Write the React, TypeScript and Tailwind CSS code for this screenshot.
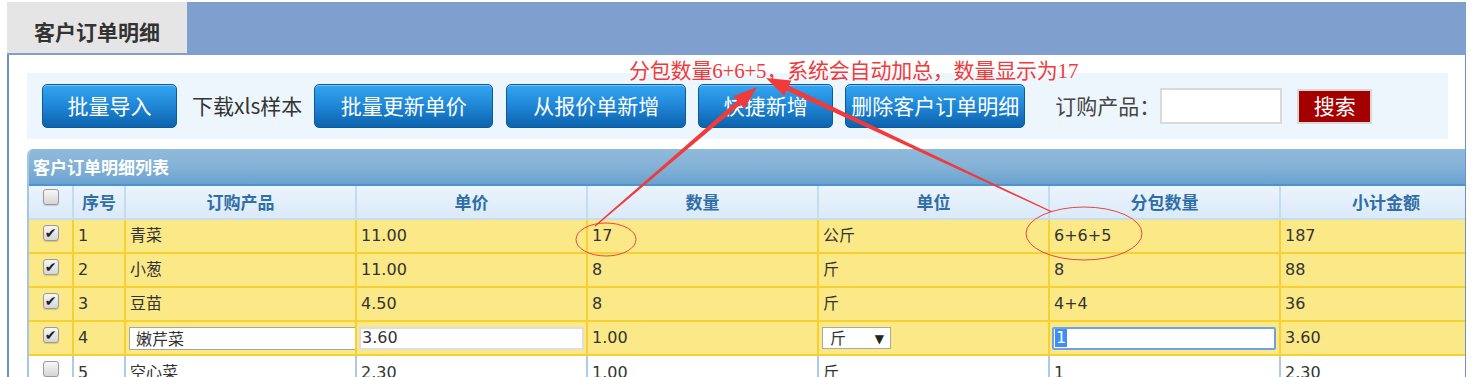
import React from 'react';

const cols = [45, 52, 231, 231, 231, 231, 231, 212];
const headers = ['', '序号', '订购产品', '单价', '数量', '单位', '分包数量', '小计金额'];

const rows = [
    { no: '1', name: '青菜', price: '11.00', qty: '17', unit: '公斤', pack: '6+6+5', total: '187', checked: true },
    { no: '2', name: '小葱', price: '11.00', qty: '8', unit: '斤', pack: '8', total: '88', checked: true },
    { no: '3', name: '豆苗', price: '4.50', qty: '8', unit: '斤', pack: '4+4', total: '36', checked: true },
];

const cjk = "font-['Noto_Sans_CJK_SC',sans-serif]";
const cell = "font-['DejaVu_Sans','Noto_Sans_CJK_SC',sans-serif]";

// tapered arrow shape pointing at (x2, y2)
const arrowPoints = (x1: number, y1: number, x2: number, y2: number) => {
    const dx = x2 - x1, dy = y2 - y1;
    const len = Math.hypot(dx, dy);
    const ux = dx / len, uy = dy / len;
    const nx = -uy, ny = ux;
    const head = 24, hw = 8.5, w0 = 0.6, w1 = 2.6;
    const bx = x2 - ux * head, by = y2 - uy * head;
    const p = [
        [x1 + nx * w0, y1 + ny * w0],
        [bx + nx * w1, by + ny * w1],
        [bx + nx * hw, by + ny * hw],
        [x2, y2],
        [bx - nx * hw, by - ny * hw],
        [bx - nx * w1, by - ny * w1],
        [x1 - nx * w0, y1 - ny * w0],
    ];
    return p.map((q) => q[0].toFixed(1) + ',' + q[1].toFixed(1)).join(' ');
};

const Checkbox = ({ checked }: { checked: boolean }) => (
    <div className="w-[16px] h-[16px] rounded-[3px] border border-[#9a9a9a] bg-linear-to-b from-[#f7f7f7] to-[#d6d6d6] shadow-[0_1px_1px_rgba(0,0,0,0.15)] flex items-center justify-center">
        {checked && <span className="text-[14px] leading-none font-bold text-[#1e1e1e] font-['DejaVu_Sans',sans-serif]">✔</span>}
    </div>
);

const BlueButton = ({ label, width }: { label: string; width: string }) => (
    <button className={`${width} h-[44px] shrink-0 rounded-[5px] border border-[#0b5a9e] bg-linear-to-b from-[#35a6f1] via-[#1f86d6] to-[#0c63ad] text-white text-[21px] ${cjk} shadow-[inset_0_1px_0_rgba(255,255,255,0.35)] flex items-center justify-center`}>
        {label}
    </button>
);

const App = () => {
    return (
        <div className="relative w-[1484px] h-[377px] overflow-hidden bg-white">
            <div className="pt-[2px] pl-[7px] w-[1466px]">
                {/* top tab bar */}
                <div className="h-[53px] bg-[#7fa0cf] flex items-start">
                    <div className={`w-[180px] h-[51px] bg-[#e5e5e5] flex items-center justify-center pt-[8px] text-[21px] font-bold text-[#333] ${cjk}`}>
                        客户订单明细
                    </div>
                </div>

                {/* panel */}
                <div className="border-l-2 border-r border-[#6d91c6] h-[330px] overflow-hidden">
                    {/* toolbar */}
                    <div className={`mt-[18px] ml-[18px] w-[1421px] h-[66px] bg-[#eef6fd] flex items-center pl-[15px] ${cjk}`}>
                        <BlueButton label="批量导入" width="w-[135px]" />
                        <span className="ml-[15px] text-[21px] text-[#333]">下载xls样本</span>
                        <div className="ml-[12px]"><BlueButton label="批量更新单价" width="w-[179px]" /></div>
                        <div className="ml-[13px]"><BlueButton label="从报价单新增" width="w-[180px]" /></div>
                        <div className="ml-[12px]"><BlueButton label="快捷新增" width="w-[135px]" /></div>
                        <div className="ml-[12px]"><BlueButton label="删除客户订单明细" width="w-[180px]" /></div>
                        <span className="ml-[30px] text-[21px] text-[#444]">订购产品：</span>
                        <div className="w-[122px] h-[36px] border-2 border-[#dadada] bg-white" />
                        <button className="ml-[15px] w-[75px] h-[35px] border-2 border-[#d8d8d8] bg-[#a50000] text-white text-[21px] flex items-center justify-center">
                            搜索
                        </button>
                    </div>

                    {/* table */}
                    <div className="mt-[10px] ml-[18px] w-[1468px] border-l-2 border-[#a6c6e3] rounded-tl-[6px] overflow-hidden">
                        <div className={`h-[37px] border-b-2 border-[#4a94d3] bg-linear-to-b from-[#8fbadb] via-[#84b2d7] to-[#6aa2cf] flex items-center pl-[4px] text-white font-bold text-[17px] ${cjk}`}>
                            客户订单明细列表
                        </div>
                        {/* header row */}
                        <div className="flex h-[34px] border-b-2 border-[#c9dced] bg-linear-to-b from-[#ebf4fd] to-[#dbeaf8]">
                            {headers.map((h, i) => (
                                <div
                                    key={i}
                                    style={{ width: cols[i] }}
                                    className={`shrink-0 h-full border-r-2 border-[#c5dbee] flex justify-center ${i === 0 ? 'items-start pt-[3px]' : 'items-center'} text-[17px] font-bold text-[#2f6ea6] ${cjk}`}
                                >
                                    {i === 0 ? <Checkbox checked={false} /> : h}
                                </div>
                            ))}
                        </div>

                        {rows.map((r) => (
                            <div key={r.no} className={`flex h-[34px] border-b-2 border-[#f8d131] bg-[#fbe987] text-[16px] text-[#333] ${cell}`}>
                                <div style={{ width: cols[0] }} className="shrink-0 border-r-2 border-[#f8d131] flex justify-center pt-[5px]"><Checkbox checked={r.checked} /></div>
                                {[r.no, r.name, r.price, r.qty, r.unit, r.pack, r.total].map((v, j) => (
                                    <div key={j} style={{ width: cols[j + 1] }} className="shrink-0 border-r-2 border-[#f8d131] flex items-center pl-[4px]">{v}</div>
                                ))}
                            </div>
                        ))}

                        {/* row being edited */}
                        <div className={`flex h-[34px] border-b-2 border-[#f8d131] bg-[#fbe987] text-[16px] text-[#333] ${cell}`}>
                            <div style={{ width: cols[0] }} className="shrink-0 border-r-2 border-[#f8d131] flex justify-center pt-[5px]"><Checkbox checked={true} /></div>
                            <div style={{ width: cols[1] }} className="shrink-0 border-r-2 border-[#f8d131] flex items-center pl-[4px]">4</div>
                            <div style={{ width: cols[2] }} className="shrink-0 border-r-2 border-[#f8d131] flex items-center pl-[3px]">
                                <div className="w-[228px] h-[23px] bg-white border border-[#a5a5a5] border-r-0 flex items-center pl-[6px] pt-[3px]">嫩芹菜</div>
                            </div>
                            <div style={{ width: cols[3] }} className="shrink-0 border-r-2 border-[#f8d131] flex items-center pl-[2px]">
                                <div className="w-[225px] h-[23px] bg-white border-2 border-[#dedede] flex items-center pl-[1px]">3.60</div>
                            </div>
                            <div style={{ width: cols[4] }} className="shrink-0 border-r-2 border-[#f8d131] flex items-center pl-[4px]">1.00</div>
                            <div style={{ width: cols[5] }} className="shrink-0 border-r-2 border-[#f8d131] flex items-center pl-[3px]">
                                <div className="w-[69px] h-[22px] bg-white border border-[#a9a9a9] flex items-center justify-between pl-[7px] pr-[6px] pt-[2px]">
                                    <span>斤</span>
                                    <span className="text-[12px] text-[#222]">▼</span>
                                </div>
                            </div>
                            <div style={{ width: cols[6] }} className="shrink-0 border-r-2 border-[#f8d131] flex items-center pl-[2px]">
                                <div className="w-[224px] h-[23px] bg-white border-2 border-[#6da2ea] rounded-[2px] flex items-center pl-[1px]">
                                    <span className="bg-[#3d8ef6] text-white h-[18px] leading-[18px] px-[1px]">1</span>
                                </div>
                            </div>
                            <div style={{ width: cols[7] }} className="shrink-0 border-r-2 border-[#f8d131] flex items-center pl-[4px]">3.60</div>
                        </div>

                        {/* plain row */}
                        <div className={`flex h-[34px] bg-white text-[16px] text-[#333] ${cell}`}>
                            <div style={{ width: cols[0] }} className="shrink-0 border-r-2 border-[#abcbe8] flex justify-center pt-[5px]"><Checkbox checked={false} /></div>
                            {['5', '空心菜', '2.30', '1.00', '斤', '1', '2.30'].map((v, j) => (
                                <div key={j} style={{ width: cols[j + 1] }} className="shrink-0 border-r-2 border-[#abcbe8] flex items-center pl-[4px]">{v}</div>
                            ))}
                        </div>
                    </div>
                </div>
            </div>

            {/* annotation overlay */}
            <div className="absolute left-[629px] top-[58px] text-[21px] leading-[26px] tracking-[-0.2px] text-[#f03b3d] font-['Liberation_Serif','Noto_Sans_CJK_SC',serif] whitespace-nowrap">
                分包数量6+6+5，系统会自动加总，数量显示为17
            </div>
            <svg className="absolute left-0 top-0 pointer-events-none" width="1484" height="377" viewBox="0 0 1484 377">
                <polygon points={arrowPoints(595, 226, 757, 87)} fill="#f23a3a" />
                <polygon points={arrowPoints(1052, 212, 766, 78)} fill="#f23a3a" />
                <ellipse cx="606" cy="239.5" rx="30" ry="16.5" fill="none" stroke="#e8453f" strokeWidth="1" />
                <ellipse cx="1084" cy="233.5" rx="58" ry="26.5" fill="none" stroke="#e8453f" strokeWidth="1" />
            </svg>
        </div>
    );
};

export default App;
